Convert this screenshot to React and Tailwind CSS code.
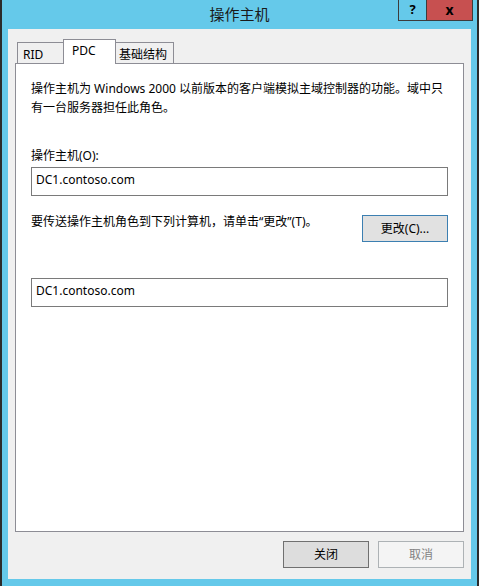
import React from "react";

const F = { fontFamily: '"Noto Sans", "Noto Sans CJK SC", sans-serif' };

export default function App() {
  return (
    <div
      style={F}
      className="relative flex h-[586px] w-[479px] flex-col border-x-2 border-[#2b2b2b] bg-[#65c9ea]"
    >
      <div className="flex h-[29px] items-center justify-center pb-[1px] text-[15px] text-[#1a1a1a]">
        操作主机
      </div>
      <div className="absolute right-[4px] top-0 flex h-[21px]">
        <div className="flex w-[29px] items-center justify-center border border-t-0 border-[#3c3c3c] bg-[#65c9ea] text-[13px] font-bold text-black">
          ?
        </div>
        <div className="-ml-px flex w-[47px] items-center justify-center border border-t-0 border-[#3c3c3c] bg-[#c75050] text-[14px] font-bold leading-none text-black">
          x
        </div>
      </div>

      <div className="mx-[6px] flex h-[550px] flex-col bg-[#f0f0f0] px-[7px] pb-[11px] pt-[10px]">
        <div className="flex h-[24px] items-end whitespace-nowrap pl-[2px] text-[12px] leading-[19px] text-black">
          <div className="h-[21px] w-[47px] shrink-0 border border-b-0 border-[#8d8d95] bg-[#f0f0f0] pl-[5px] pt-[2px]">
            RID
          </div>
          <div className="relative z-10 -mb-px -ml-px h-[25px] w-[53px] shrink-0 border border-b-0 border-[#8d8d95] bg-white pl-[8px] pt-[1px]">
            PDC
          </div>
          <div className="-ml-px h-[21px] w-[59px] shrink-0 border border-b-0 border-[#8d8d95] bg-[#f0f0f0] pl-[3px] pt-[2px]">
            基础结构
          </div>
        </div>
        <div className="flex flex-1 flex-col border border-[#8d8d95] bg-white px-[15px] pt-[15px] text-[12px] leading-[19px] text-black">
          <p className="pr-[1px]">
            操作主机为 Windows 2000 以前版本的客户端模拟主域控制器的功能。域中只有一台服务器担任此角色。
          </p>
          <div className="mt-[29px]">操作主机(O):</div>
          <div className="mt-[2px] h-[29px] border border-[#7a7a7a] bg-white pl-[4px] pt-[2px]">
            DC1.contoso.com
          </div>
          <div className="mt-[16px] flex items-start justify-between">
            <div>要传送操作主机角色到下列计算机，请单击“更改”(T)。</div>
            <div className="mt-[3px] flex h-[27px] w-[86px] items-center justify-center border border-[#3c7fb1] bg-[#e1e1e1]">
              更改(C)...
            </div>
          </div>
          <div className="mt-[36px] h-[29px] border border-[#7a7a7a] bg-white pl-[4px] pt-[2px]">
            DC1.contoso.com
          </div>
        </div>
        <div className="mt-[9px] flex justify-end gap-[9px] text-[12px]">
          <div className="flex h-[27px] w-[86px] items-center justify-center border border-[#707070] bg-[#dddddd] text-black">
            关闭
          </div>
          <div className="flex h-[27px] w-[86px] items-center justify-center border border-[#adb2b5] bg-[#f4f4f4] text-[#838383]">
            取消
          </div>
        </div>
      </div>
    </div>
  );
}
